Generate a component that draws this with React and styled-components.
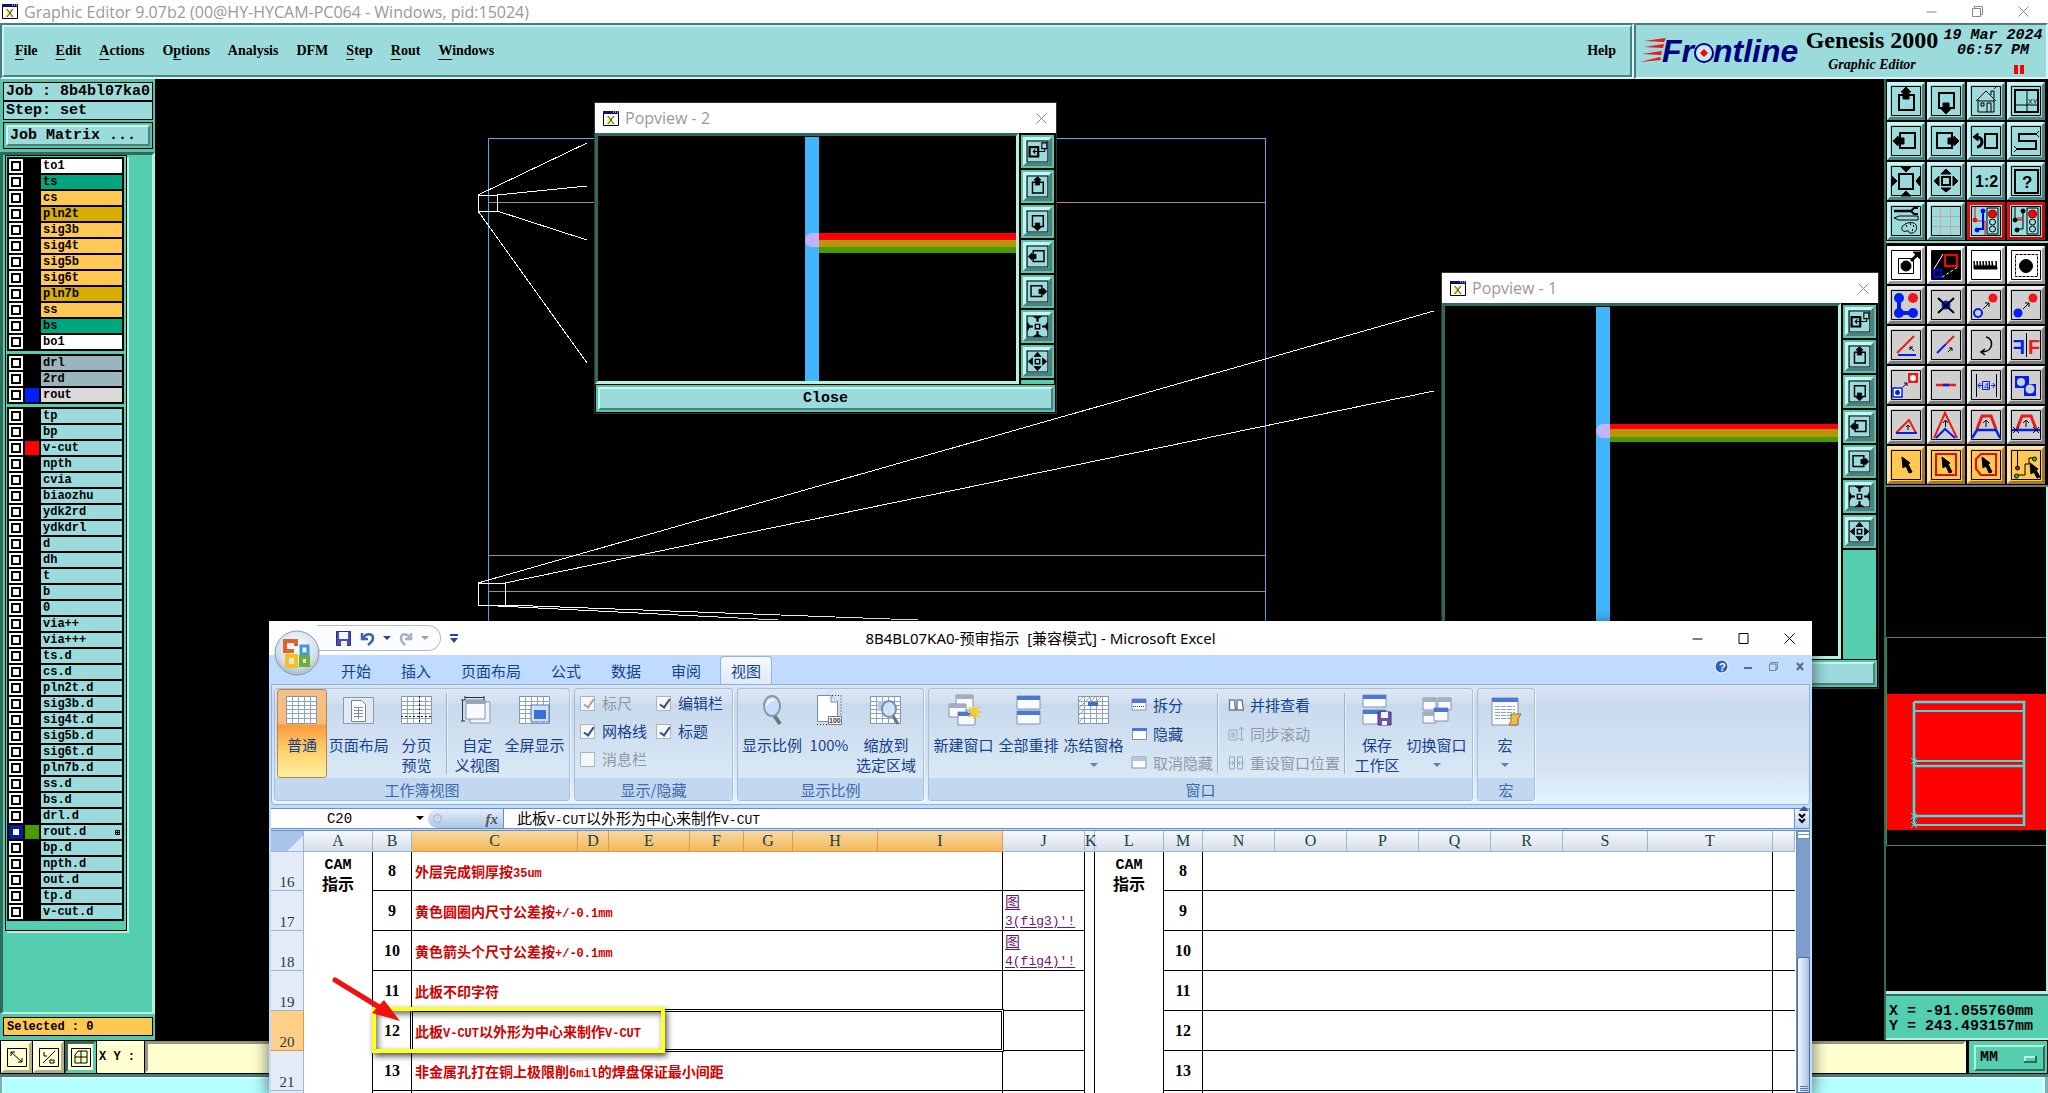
import React from "react";
import styled, { createGlobalStyle, css } from "styled-components";

const ui = `"Open Sans", "Noto Sans CJK SC", sans-serif`;
const cjk = `"Noto Sans CJK SC", sans-serif`;
const mono = `"Liberation Mono", monospace`;
const serif = `"Liberation Serif", serif`;

const GlobalStyle = createGlobalStyle`
  * {
    box-sizing: border-box;
  }
  body {
    margin: 0;
    background: #000;
    overflow: hidden;
  }
  button, input, select {
    font: inherit;
    color: inherit;
    margin: 0;
    border-radius: 0;
  }
  button {
    padding: 0;
    background: none;
    border: none;
  }
  svg {
    display: block;
  }
`;

const raised = css`
  border: 2px solid;
  border-color: #c5f6f3 #4d8180 #4d8180 #c5f6f3;
`;

const sunken = css`
  border: 2px solid;
  border-color: #4d7a7a #d6f7f6 #d6f7f6 #4d7a7a;
`;

const Screen = styled.div`
  position: relative;
  display: flex;
  flex-direction: column;
  height: 100vh;
  overflow: hidden;
  background: #000;
  font-family: ${ui};
`;

/* ---------- title bars ---------- */

const TitleBar = styled.header`
  display: flex;
  align-items: center;
  gap: 6px;
  height: ${(props) => props.height || 23}px;
  padding: 0 ${(props) => props.pad || 2}px;
  background: #fff;
  color: #999;
  font-size: 16px;
  line-height: 20px;
  white-space: nowrap;
`;

const Fill = styled.span`
  flex: 1;
`;

const WindowButton = styled.button`
  display: flex;
  justify-content: center;
  align-items: center;
  width: ${(props) => props.width || 46}px;
  height: 20px;
  color: ${(props) => props.color || "#888"};
`;

/* ---------- menu ---------- */

const MenuRow = styled.div`
  display: flex;
  height: 56px;
  flex-shrink: 0;
`;

const MenuFrame = styled.nav`
  ${sunken}
  flex: 1;
  background: #9bdbdb;
`;

const MenuInner = styled.div`
  ${raised}
  display: flex;
  align-items: center;
  gap: 18px;
  height: 100%;
  padding: 0 14px 0 11px;
`;

const MenuItem = styled.button`
  font-family: ${serif};
  font-weight: bold;
  font-size: 14px;
  line-height: 18px;
  color: #000;
  margin-left: ${(props) => (props.last ? "auto" : 0)};
  u {
    text-underline-offset: 4px;
  }
`;

const Brand = styled.div`
  ${sunken}
  display: flex;
  width: 414px;
  padding: 2px 2px 2px 4px;
  background: #9bdbdb;
  color: #000;
`;

const BrandName = styled.div`
  font-family: ${serif};
  font-weight: bold;
  font-size: 24px;
  line-height: 26px;
  text-align: center;
  width: 136px;
  white-space: nowrap;
  em {
    display: block;
    font-size: 14px;
    line-height: 24px;
  }
`;

const Clock = styled.div`
  flex: 1;
  display: flex;
  flex-direction: column;
  align-items: center;
  padding: 1px 0 0 2px;
  font: italic bold 15px/15px ${mono};
  white-space: nowrap;
`;

const Pause = styled.i`
  width: 10px;
  height: 9px;
  margin: 7px 0 0 52px;
  border: solid #f00;
  border-width: 0 4px;
`;

/* ---------- layer list ---------- */

const Body = styled.div`
  display: flex;
  flex: 1;
  min-height: 0;
`;

const Sidebar = styled.aside`
  display: flex;
  flex-direction: column;
  width: 155px;
  background: #55ceb0;
  font-family: ${mono};
  font-weight: bold;
  color: #000;
`;

const JobInfo = styled.div`
  padding: 3px 2px 3px 3px;
  background: #55c4a8;
  font-size: 15px;
`;

const InfoLine = styled.div`
  height: 19px;
  border: 1px solid #000;
  background: #9bdbdb;
  padding-left: 2px;
  line-height: 18px;
  white-space: pre;
`;

const MatrixBox = styled.div`
  margin-top: 2px;
  border: 1px solid #000;
  padding: 2px;
`;

const MatrixButton = styled.button`
  ${raised}
  width: 100%;
  height: 21px;
  padding-left: 2px;
  background: #9bdbdb;
  text-align: left;
  line-height: 17px;
`;

const LayerArea = styled.div`
  flex: 1;
  border: 3px solid;
  border-color: #2e6b5c #b5f0e0 #b5f0e0 #2e6b5c;
  border-bottom-width: 2px;
  padding-left: 2px;
`;

const LayerFrame = styled.div`
  display: flex;
  flex-direction: column;
  gap: 3px;
  width: 122px;
  padding: 1px 2px 9px 1px;
  border: 1px solid #000;
  box-shadow: 2px 2px 0 #b5f0e0;
`;

const LayerGroup = styled.div`
  display: grid;
  gap: 2px;
  padding: 2px;
  background: #000;
`;

const LayerRow = styled.label`
  display: grid;
  grid-template-columns: 14px 14px 1fr;
  gap: 2px;
  height: 14px;
  font-size: 12px;
  line-height: 14px;
`;

const LayerCheck = styled.input`
  appearance: none;
  width: 14px;
  height: 14px;
  background: #fff;
  box-shadow: inset 0 0 0 2px ${(props) => (props.checked ? "#0a1a9c" : "#fff")},
    inset 0 0 0 4px ${(props) => (props.checked ? "#0a1a9c" : "#000")};
`;

const Swatch = styled.span`
  background: ${(props) => props.color};
`;

const LayerName = styled.span`
  display: flex;
  justify-content: space-between;
  padding: 0 2px;
  background: ${(props) => props.color};
`;

const SelectedBar = styled.div`
  padding: 3px 2px 4px 3px;
  background: #55c4a8;
  font-size: 12px;
  div {
    height: 19px;
    padding-left: 3px;
    border: 1px solid #000;
    background: #ffc852;
    line-height: 18px;
  }
`;

const Canvas = styled.main`
  flex: 1;
  background: #000;
  svg {
    width: 100%;
    height: 100%;
  }
`;

/* ---------- tool palette ---------- */

const Palette = styled.aside`
  display: flex;
  flex-direction: column;
  width: 164px;
  border-left: 2px solid #2e6b5c;
`;

const ToolGrid = styled.div`
  display: grid;
  grid-template-columns: repeat(4, 38px);
  gap: 2px;
  padding: 3px 0 1px 1px;
  border-bottom: 2px solid ${(props) => props.edge};
`;

const tones = {
  teal: ["#9bdbdb", "#c5f6f3", "#4d8180"],
  alert: ["#9bdbdb", "#e01010", "#b01010"],
  white: ["#fff", "#fff", "#9a9a9a"],
  grey: ["#cfcfcf", "#efefef", "#7b7b7b"],
  orange: ["#ffc852", "#ffe6a8", "#a07a28"],
};

const Tool = styled.button`
  width: 38px;
  height: 38px;
  background: ${(props) => tones[props.tone][0]};
  border: 3px solid;
  border-color: ${(props) => tones[props.tone][1]} ${(props) => tones[props.tone][2]}
    ${(props) => tones[props.tone][2]} ${(props) => tones[props.tone][1]};
`;

const Overview = styled.div`
  flex: 1;
  border: solid #b5f0e0;
  border-width: 0 2px 3px 0;
  svg {
    width: 100%;
    height: 100%;
  }
`;

const Coords = styled.div`
  height: 46px;
  padding: 8px 0 0 3px;
  background: #55ceb0;
  border-top: 2px solid #2e6b5c;
  border-bottom: 2px solid #b5f0e0;
  font: bold 15px/15px ${mono};
  white-space: pre;
`;

/* ---------- bottom strip ---------- */

const EntryBar = styled.div`
  display: flex;
  gap: 1px;
  height: 34px;
  padding: 1px;
  flex-shrink: 0;
`;

const SnapButton = styled.button`
  display: flex;
  justify-content: center;
  align-items: center;
  width: 31px;
  border: 3px solid;
  border-color: ${(props) => (props.on ? "#2e6b5c #55ceb0 #55ceb0 #2e6b5c" : "#ffffe8 #b0af86 #b0af86 #ffffe8")};
  background: #ffffcf;
`;

const EntryLabel = styled.label`
  width: 47px;
  padding-left: 2px;
  background: #ffffcf;
  font: bold 12px/32px ${mono};
  white-space: nowrap;
`;

const Entry = styled.input`
  flex: 1;
  min-width: 0;
  border: 3px solid;
  border-color: #97967a #ffffcf #ffffcf #97967a;
  background: #ffffcf;
  padding: 0 3px;
  font: 15px/24px ${mono};
`;

const UnitBox = styled.div`
  width: 78px;
  margin-left: 2px;
  padding: 3px 2px 3px 5px;
  background: #55ceb0;
`;

const UnitSelect = styled.select`
  appearance: none;
  width: 100%;
  height: 26px;
  padding-left: 4px;
  border: 2px solid;
  border-color: #b5f0e0 #2e6b5c #2e6b5c #b5f0e0;
  font: bold 15px/20px ${mono};
  background: linear-gradient(#2e6b5c, #2e6b5c) 48px 14px / 12px 2px no-repeat,
    linear-gradient(#2e6b5c, #2e6b5c) 59px 9px / 2px 7px no-repeat,
    linear-gradient(#b5f0e0, #b5f0e0) 48px 9px / 12px 2px no-repeat,
    linear-gradient(#b5f0e0, #b5f0e0) 48px 9px / 2px 6px no-repeat, #55ceb0;
`;

const MessageStrip = styled.div`
  height: 19px;
  flex-shrink: 0;
  border-top: 3px solid #4d7a7a;
  padding: 0 3px 0 2px;
  background: #6fb5b4;
  div {
    height: 16px;
    background: #b2fffd;
    border: solid #d9ffff;
    border-width: 2px 3px 0 2px;
  }
`;

/* ---------- popview windows ---------- */

const PopWindow = styled.section`
  position: absolute;
  left: ${(props) => props.x}px;
  top: ${(props) => props.y}px;
  width: ${(props) => props.width}px;
  outline: 1px solid #333;
  background: #000;
`;

const PopBody = styled.div`
  display: flex;
  gap: 2px;
  height: ${(props) => props.height}px;
`;

const PopView = styled.div`
  flex: 1;
  border: 3px solid;
  border-color: #2e6b5c #b5f0e0 #b5f0e0 #2e6b5c;
  svg {
    width: 100%;
    height: 100%;
  }
`;

const PopTools = styled.div`
  display: flex;
  flex-direction: column;
  gap: 2px;
  width: 35px;
  padding: 2px 2px 0 0;
`;

const PopTool = styled.button`
  width: 33px;
  height: 33px;
  padding: 2px;
  flex-shrink: 0;
  background: #55c4a8;
  span {
    display: block;
    background: #9bdbdb;
    border: 3px solid;
    border-color: #c5f6f3 #4d8180 #4d8180 #c5f6f3;
  }
`;

const PopFiller = styled.div`
  flex: 1;
  background: #55ceb0;
`;

const PopClose = styled.button`
  display: block;
  width: calc(100% - 2px);
  height: 27px;
  margin: 1px;
  padding: 2px;
  background: #55c4a8;
  span {
    ${raised}
    display: block;
    height: 23px;
    background: #9bdbdb;
    font: bold 15px/20px ${mono};
  }
`;

/* ---------- spreadsheet window ---------- */

const ExcelWindow = styled.section`
  position: absolute;
  left: 269px;
  right: 236px;
  top: 621px;
  bottom: 0;
  display: flex;
  flex-direction: column;
  overflow: hidden;
  background: #bfdbff;
  color: #15428b;
  font: 15px/20px ${cjk};
`;

const Shadow = styled.div`
  position: absolute;
  left: 269px;
  right: 236px;
  top: 621px;
  bottom: 0;
  box-shadow: 0 4px 16px rgba(0, 0, 0, 0.6);
`;

const ExcelTitle = styled.header`
  display: grid;
  grid-template-columns: 1fr auto 1fr;
  align-items: center;
  height: 34px;
  flex-shrink: 0;
  background: #fff;
  color: #000;
  font-family: "Noto Sans", "Noto Sans CJK SC", sans-serif;
  white-space: pre;
`;

const QuickBar = styled.div`
  display: flex;
  align-items: center;
  gap: 9px;
  padding-left: 48px;
`;

const QuickPill = styled.div`
  display: flex;
  align-items: center;
  gap: 6px;
  height: 26px;
  width: 124px;
  padding-left: 19px;
  border: 1px solid #b7bcc4;
  border-left: none;
  border-radius: 0 13px 13px 0;
  background: #fbfcfd;
`;

const TitleControls = styled.div`
  display: flex;
  justify-content: flex-end;
`;

const OfficeButton = styled.button`
  position: absolute;
  left: 5px;
  top: 9px;
`;

const TabRow = styled.div`
  display: flex;
  gap: 8px;
  height: 29px;
  padding: 1px 4px 0 61px;
  flex-shrink: 0;
`;

const Tab = styled.button`
  height: 29px;
  padding: 0 10px;
  border: 1px solid ${(props) => (props.active ? "#8db2e3" : "transparent")};
  border-bottom: none;
  border-radius: 4px 4px 0 0;
  background: ${(props) => (props.active ? "linear-gradient(#f5faff, #dde8f5)" : "none")};
  white-space: nowrap;
`;

const Ribbon = styled.div`
  display: flex;
  gap: 4px;
  margin: 0 2px;
  padding: 3px 2px;
  height: 121px;
  flex-shrink: 0;
  border: 1px solid #8db2e3;
  border-radius: 0 0 4px 4px;
  background: linear-gradient(#dbe6f4, #cfddee 14px, #c8d8ed 15px, #d5e3f3 70%, #e3f3ff);
`;

const Group = styled.section`
  display: flex;
  flex-direction: column;
  width: ${(props) => props.width}px;
  border: 1px solid #a5bfdd;
  border-radius: 3px;
  background: linear-gradient(#dde7f4, #d2dff0 14px, #c8d9ed 15px, #dbe9f6 91px);
  box-shadow: 1px 1px 0 #eef6ff;
  overflow: hidden;
`;

const GroupBody = styled.div`
  display: flex;
  flex: 1;
  padding: 0 2px;
`;

const GroupName = styled.div`
  height: 22px;
  background: #c1d8f0;
  color: #3e6aaa;
  text-align: center;
  line-height: 24px;
`;

const BigButton = styled.button`
  display: flex;
  flex-direction: column;
  align-items: center;
  width: ${(props) => props.width || 65}px;
  padding-top: 4px;
  white-space: pre;
  border: 1px solid ${(props) => (props.active ? "#b08a55" : "transparent")};
  border-radius: 3px;
  background: ${(props) =>
    props.active ? "linear-gradient(#f4c08a, #fbbb78 34px, #fb9b3c 35px, #fdd06a 70%, #fff0a0)" : "none"};
  span {
    margin-top: 7px;
  }
`;

const Caret = styled.i`
  width: 0;
  margin-top: ${(props) => props.top || 0}px;
  border: 4px solid transparent;
  border-top-color: ${(props) => props.color || "#5a7fb5"};
  border-bottom: none;
`;

const Divider = styled.i`
  width: 2px;
  margin: 4px 4px;
  background: #93b3da;
  border-right: 1px solid #eaf3fc;
`;

const CheckGrid = styled.div`
  display: grid;
  grid-template-columns: 76px 1fr;
  grid-auto-rows: 28px;
  padding-left: 3px;
`;

const CheckLabel = styled.label`
  display: flex;
  align-items: center;
  gap: 7px;
  color: ${(props) => (props.off ? "#8f98a5" : "#15428b")};
  white-space: nowrap;
`;

const Check = styled.input`
  appearance: none;
  width: 15px;
  height: 15px;
  border: 1px solid #aab6c6;
  background: #f6f6f4;
  &:checked::before {
    content: "";
    display: block;
    width: 4px;
    height: 9px;
    margin: 0 0 0 5px;
    border: solid ${(props) => (props.disabled ? "#a5a5a5" : "#33508a")};
    border-width: 0 2px 2px 0;
    transform: rotate(35deg);
  }
`;

const SmallList = styled.div`
  display: flex;
  flex-direction: column;
  gap: 9px;
  padding: 6px 0 0 5px;
`;

const SmallButton = styled.button`
  display: flex;
  align-items: center;
  gap: 6px;
  height: 20px;
  color: ${(props) => (props.disabled ? "#8f98a5" : "#15428b")};
  white-space: nowrap;
`;

const FormulaBar = styled.div`
  display: flex;
  height: 21px;
  margin: 3px 2px 1px;
  flex-shrink: 0;
  border: 1px solid #6a8fc0;
  border-left: none;
  background: #fff;
  color: #000;
`;

const NameBox = styled.input`
  width: 145px;
  border: none;
  text-align: center;
  font: 14px/18px ${mono};
  padding: 0 8px 0 0;
`;

const FxArea = styled.div`
  display: flex;
  align-items: center;
  justify-content: space-between;
  width: 76px;
  margin-left: 4px;
  padding: 0 5px;
  border-right: 1px solid #6a8fc0;
  border-radius: 10px 0 0 10px;
  background: linear-gradient(#e6effa, #a9c4e8);
  font: italic bold 15px/18px ${serif};
  color: #555;
  i {
    width: 9px;
    height: 9px;
    border-radius: 5px;
    background: #cdd8e8;
    border: 1px solid #9fb4d2;
  }
`;

const Formula = styled.div`
  flex: 1;
  padding-left: 13px;
  line-height: 18px;
`;

const ExpandButton = styled.button`
  width: 15px;
  border-left: 1px solid #6a8fc0;
  background: linear-gradient(#f0f6ff, #bdd2ee);
  svg {
    margin: 0 auto;
  }
`;

const Ascii = styled.span`
  font-family: ${mono};
  font-size: ${(props) => props.size}px;
  line-height: 1;
`;

const SheetArea = styled.div`
  position: relative;
  display: flex;
  flex: 1;
  min-height: 0;
  margin: 0 2px;
  border-top: 1px solid #6a8fc0;
  background: #fff;
`;

const SheetClip = styled.div`
  flex: 1;
  min-width: 0;
  overflow: hidden;
`;

const Sheet = styled.table`
  table-layout: fixed;
  width: 1524px;
  border-spacing: 0;
  color: #000;
`;

const ColHead = styled.th`
  height: 21px;
  padding: 0;
  border: solid #9eb6ce;
  border-width: 0 1px 1px 0;
  background: ${(props) => (props.on ? "linear-gradient(#f8d8a0, #f2b95c)" : "linear-gradient(#f6f9fc, #d5deea)")};
  border-color: ${(props) => (props.on ? "#e8954a" : "#9eb6ce")};
  font: 16px/20px ${serif};
  color: #20403f;
`;

const Corner = styled(ColHead)`
  background: linear-gradient(135deg, #a9c4e9 70%, #dfe9f6 70%);
`;

const RowHead = styled.th`
  height: ${(props) => props.height}px;
  padding: 0;
  vertical-align: bottom;
  border: solid ${(props) => (props.on ? "#e8954a" : "#9eb6ce")};
  border-width: 0 1px 1px 0;
  background: ${(props) => (props.on ? "#ffcf87" : "#e4ecf7")};
  font: 15px/15px ${serif};
  color: #20403f;
`;

const Cell = styled.td`
  position: relative;
  height: 0;
  padding: 0 3px;
  border: solid #000;
  border-width: 0 ${(props) => (props.noRight ? 0 : 1)}px ${(props) => (props.open ? 0 : 1)}px 0;
  white-space: nowrap;
`;

const SideCell = styled(Cell)`
  vertical-align: top;
  text-align: center;
  font-weight: bold;
  font-size: 16px;
  line-height: 20px;
`;

const NumCell = styled(Cell)`
  text-align: center;
  font: bold 16px/20px ${serif};
`;

const NoteCell = styled(Cell)`
  color: #d40000;
  font-weight: bold;
  font-size: 14px;
  line-height: 18px;
`;

const LinkCell = styled(Cell)`
  padding: 0 2px;
  a {
    display: block;
    height: 38px;
    color: #74146e;
    line-height: 18px;
    text-underline-offset: 2px;
  }
`;

const Selection = styled.i`
  position: absolute;
  inset: -1px;
  border: 1px solid #fff;
  box-shadow: 0 0 0 1px #000, inset 0 0 0 1px #000;
`;

const Callout = styled.div`
  position: absolute;
  left: 101px;
  top: 176px;
  width: 293px;
  height: 46px;
  border: 4px solid #ffff1e;
  box-shadow: 2px 3px 6px rgba(0, 0, 0, 0.7), inset 2px 3px 6px rgba(0, 0, 0, 0.6);
`;

const Pointer = styled.svg`
  position: absolute;
  left: 59px;
  top: 144px;
`;

const ScrollBar = styled.div`
  display: flex;
  flex-direction: column;
  align-items: center;
  width: 14px;
  border-left: 1px solid #6a8fc0;
  background: #7d9dcb;
`;

const SplitBox = styled.div`
  width: 13px;
  height: 8px;
  border: 1px solid #6a8fc0;
  background: linear-gradient(#fff 2px, #6a8fc0 2px, #6a8fc0 3px, #fff 3px);
`;

const UpArrow = styled.button`
  height: 118px;
  &::before {
    content: "";
    display: block;
    margin-top: -92px;
    border: 5px solid transparent;
    border-bottom-color: #3b5788;
    border-top: none;
  }
`;

const Thumb = styled.div`
  display: flex;
  flex-direction: column;
  align-items: center;
  flex: 1;
  width: 13px;
  padding-top: 128px;
  border: 1px solid #4d6c9c;
  border-radius: 2px 2px 0 0;
  background: linear-gradient(90deg, #f2f6fc, #cfdcf0 50%, #a9bedd);
  i {
    width: 8px;
    height: 1px;
    margin-bottom: 1px;
    background: #5d7aa8;
  }
`;

/* ---------- drawings ---------- */

const AppIcon = () => (
  <svg width="16" height="15" viewBox="0 0 16 15">
    <path d="M0.5 0.5h15v14h-15z" fill="#fff" stroke="#000" />
    <path d="M0 0h16v3H0z" fill="#10107a" />
    <path d="M10 1h1M12 1h1M14 1h1" stroke="#fff" />
    <path d="M4 5l6 8M10 5l-6 8" stroke="#f0e840" strokeWidth="2" />
    <path d="M5 5l6 8M11 5l-6 8" stroke="#444" />
  </svg>
);

const Glyph = ({ type, size = 11 }) => (
  <svg width={size} height={size} viewBox="0 0 11 11" fill="none" stroke="currentColor">
    {type === "min" && <path d="M0.5 6h10" />}
    {type === "max" && <path d="M1 0.5h9v10h-9z" />}
    {type === "restore" && <path d="M0.5 2.5h8v8h-8zM2.5 2.5v-2h8v8h-2" />}
    {type === "close" && <path d="M0.5 0.5l10 10M10.5 0.5l-10 10" />}
  </svg>
);

const FrontlineLogo = () => (
  <svg width="164" height="48" viewBox="0 0 164 48">
    <g fill="#f01818">
      <path d="M4 14l22-3-2 4z" />
      <path d="M4 20l20-3-1 4z" />
      <path d="M2 27l20-3-1 4z" />
      <path d="M0 35l20-5 1 3z" />
    </g>
    <text x="22" y="35" fontFamily="Liberation Sans, sans-serif" fontSize="32" fontWeight="bold" fontStyle="italic" fill="#000080">
      Fr
    </text>
    <circle cx="64" cy="26" r="9" fill="#c4eded" stroke="#000080" strokeWidth="2" />
    <path d="M64 22l4 4-4 4-4-4z" fill="#f00" />
    <text x="73" y="35" fontFamily="Liberation Sans, sans-serif" fontSize="32" fontWeight="bold" fontStyle="italic" fill="#000080">
      ntline
    </text>
  </svg>
);

const arrowUp = "M16 2l5 5h-2v7h-6V7h-2z";
const toolArt = {
  up: (
    <>
      <path d="M9 10h15v15H9z" fill="none" strokeWidth="2" />
      <path d={arrowUp} fill="#000" />
    </>
  ),
  down: (
    <>
      <path d="M9 8h15v15H9z" fill="none" strokeWidth="2" />
      <path d="M16 29l5-5h-2v-6h-6v6h-2z" fill="#000" />
    </>
  ),
  left: (
    <>
      <path d="M10 8h15v15H10z" fill="none" strokeWidth="2" />
      <path d="M3 16l5-5v2h6v6H8v2z" fill="#000" />
    </>
  ),
  right: (
    <>
      <path d="M7 8h15v15H7z" fill="none" strokeWidth="2" />
      <path d="M29 16l-5-5v2h-6v6h6v2z" fill="#000" />
    </>
  ),
  home: (
    <path d="M8 14v13h16V14M6 16L16 6l10 10M8 16h16M17 27v-9h4v9M11 18h3v3h-3zM21 10V6h3v7M24 4l2-2" fill="none" />
  ),
  layout: (
    <>
      <path d="M5 5h23v22H5z" fill="none" strokeWidth="2" />
      <path d="M17 5v22M5 20h23" fill="none" />
      <text x="18" y="19" fontSize="7" stroke="none" fontFamily="Liberation Sans, sans-serif">
        XY
      </text>
    </>
  ),
  undo: (
    <>
      <path d="M15 9h12v14H15z" fill="none" strokeWidth="2" />
      <path d="M6 12c5 0 6 3 6 5s-2 5-5 5" fill="none" strokeWidth="3" />
      <path d="M8 8v8l-5-4z" fill="#000" />
    </>
  ),
  path: (
    <>
      <path d="M26 9H9v7h17v8H7" fill="none" strokeWidth="2" />
      <path d="M26 9l3-3M26 9l3 3M7 24l-3-3M7 24l-3 3" />
    </>
  ),
  zoomIn: (
    <>
      <path d="M9 9h14v15H9z" fill="none" strokeWidth="2" />
      <path d="M11 2h10l-5 5zM11 31h10l-5-5zM2 11v10l5-5zM30 11v10l-4-5z" fill="#000" />
    </>
  ),
  zoomOut: (
    <>
      <path d="M12 12h8v8h-8z" fill="none" strokeWidth="2" />
      <path d="M11 9h10l-5-5zM11 23h10l-5 4zM9 11v10l-5-5zM23 11v10l5-5z" fill="#000" />
    </>
  ),
  shrink: (
    <>
      <path d="M13 13h6v6h-6z" fill="none" strokeWidth="2" />
      <path d="M10 2h12l-5 3v4h-2V5zM10 30h12l-5-3v-4h-2v4zM2 10v12l3-5h4v-2H5zM30 10v12l-3-5h-4v-2h4z" fill="#000" />
    </>
  ),
  grow: (
    <>
      <path d="M13 13h6v6h-6z" fill="none" strokeWidth="2" />
      <path d="M11 9h10l-5-6zM11 23h10l-5 6zM9 11v10l-6-5zM23 11v10l6-5z" fill="#000" />
    </>
  ),
  ratio: (
    <text x="5" y="22" fontSize="16" fontWeight="bold" stroke="none" fontFamily="Liberation Sans, sans-serif">
      1:2
    </text>
  ),
  help: (
    <>
      <path d="M5 5h23v23H5z" fill="none" strokeWidth="2" />
      <text x="12" y="23" fontSize="17" fontWeight="bold" stroke="none" fontFamily="Liberation Sans, sans-serif">
        ?
      </text>
    </>
  ),
  setup: (
    <>
      <path d="M4 6h17" strokeWidth="2.500" />
      <path d="M28 3h-4l-3 3 3 3h4" fill="none" strokeWidth="2" />
      <path d="M4 13l5-2h19v4H9z" fill="none" />
      <path d="M12 22c3-5 12-6 14-2s-1 9-6 8c-2 0 0-3-3-2s-6 0-5-4z" fill="none" />
      <path d="M16 21h1M20 19h1M23 21h1M22 25h1" strokeWidth="2" />
    </>
  ),
  grid: <path d="M10.5 2v28M20.5 2v28M2 11.5h28M2 21.5h28" stroke="#c9a3a5" />,
  netRed: (
    <>
      <path d="M5 2v14h10v14" stroke="#f00" fill="none" />
      <path d="M13 5v19H7" stroke="#00f" fill="none" strokeWidth="2" />
      <circle cx="5" cy="15" r="2" fill="#f00" stroke="#f00" />
      <circle cx="13" cy="6" r="2" fill="#00f" stroke="#00f" />
      <circle cx="7" cy="25" r="2" fill="#00f" stroke="#00f" />
      <path d="M17 3h11v26H17z" fill="none" />
      <circle cx="22.5" cy="9" r="4" fill="#f00" stroke="#800" />
      <circle cx="22.5" cy="17" r="3" fill="none" />
      <circle cx="22.5" cy="24" r="3" fill="none" />
    </>
  ),
  netBlack: (
    <>
      <path d="M5 2v14M13 5v19H7" fill="none" />
      <path d="M6 15h7M8 12v3M10 12v3M12 12v3" stroke="#e01010" />
      <circle cx="5" cy="15" r="2" />
      <circle cx="13" cy="6" r="2" />
      <circle cx="7" cy="25" r="2" />
      <path d="M17 3h11v26H17z" fill="none" />
      <circle cx="22.5" cy="9" r="4" fill="#f00" stroke="#800" />
      <circle cx="22.5" cy="17" r="3" fill="none" />
      <circle cx="22.5" cy="24" r="3" fill="none" />
    </>
  ),
  moveOut: (
    <>
      <path d="M8.5 9.5h15v15h-15z" fill="none" />
      <circle cx="16" cy="17" r="5" />
      <path d="M21 12l6-6" strokeWidth="3" />
      <path d="M23 3h7v7z" />
    </>
  ),
  copyLayer: (
    <>
      <path d="M2 2h28v28H2z" />
      <path d="M15 6h12v11H15z" fill="none" stroke="#f00" strokeWidth="2" />
      <path d="M4 21h7v7H4z" fill="none" stroke="#00f" strokeWidth="2" />
      <path d="M4 20L13 5" stroke="#fff" />
      <path d="M12 28l16-10" stroke="#fff" strokeDasharray="3 2" />
    </>
  ),
  ruler: <path d="M4 20v-8l1 5h2v-5l1 5h2v-5l1 5h2v-5l1 5h2v-5l1 5h2v-5l1 5h2v-5l1 5h3v-5l1 8z" />,
  area: (
    <>
      <path d="M5.5 5.5h22v22h-22z" fill="none" strokeDasharray="3 1" />
      <circle cx="16" cy="17" r="6.5" />
    </>
  ),
  pads: (
    <>
      <path d="M9 9v15h14" fill="none" stroke="#0020f0" strokeWidth="4" />
      <g stroke="none" fill="#0020f0">
        <circle cx="9" cy="9" r="5" />
        <circle cx="9" cy="24" r="5" />
        <circle cx="23" cy="24" r="5" />
        <circle cx="23" cy="9" r="5" fill="#f01818" />
      </g>
    </>
  ),
  erase: (
    <>
      <circle cx="16" cy="16" r="4.5" fill="#0020f0" stroke="none" />
      <path d="M8 9l16 15M24 9L8 24" strokeWidth="2" />
    </>
  ),
  moveRing: (
    <>
      <circle cx="8" cy="24" r="4" fill="none" stroke="#0020f0" strokeWidth="2" />
      <circle cx="23" cy="9" r="4.5" fill="#f01818" stroke="none" />
      <path d="M13 20l6-6M15 14h4v4" fill="none" />
    </>
  ),
  moveDot: (
    <>
      <circle cx="8" cy="24" r="4.5" fill="#0020f0" stroke="none" />
      <circle cx="23" cy="9" r="4.5" fill="#f01818" stroke="none" />
      <path d="M13 20l6-6M15 14h4v4" fill="none" />
    </>
  ),
  angle: (
    <>
      <path d="M7 24L24 7" stroke="#f01818" strokeWidth="2" />
      <path d="M8 26h18" stroke="#0020f0" strokeWidth="2" />
      <path d="M24 22l-4-4M20 21v-3h3" fill="none" />
    </>
  ),
  extend: (
    <>
      <path d="M7 24l9-9" stroke="#0020f0" strokeWidth="2" />
      <path d="M16 15l8-8" stroke="#f01818" strokeWidth="2" />
      <path d="M18 23l4-4M19 19h3v3" fill="none" />
    </>
  ),
  rotate: <path d="M16 8c8 1 8 15-4 15M15 20l-4 3 4 3" fill="none" strokeWidth="1.5" />,
  mirror: (
    <>
      <path d="M16.5 4v24" />
      <text x="18" y="25" fontSize="20" fontWeight="bold" fill="#f01818" stroke="none" fontFamily="Liberation Sans, sans-serif">
        F
      </text>
      <g transform="matrix(-1 0 0 1 32 0)">
        <text x="17" y="25" fontSize="20" fontWeight="bold" fill="#0020f0" stroke="none" fontFamily="Liberation Sans, sans-serif">
          F
        </text>
      </g>
    </>
  ),
  padSwap: (
    <>
      <path d="M18 4h10v10H18z" fill="#f01818" stroke="none" />
      <circle cx="23" cy="9" r="3" fill="#fff" stroke="none" />
      <path d="M3 19h9v9H3z" fill="#fff" stroke="#0020f0" strokeWidth="1.5" />
      <circle cx="7.5" cy="23.5" r="2.5" fill="#0020f0" stroke="none" />
      <path d="M13 18l4-4M14 14h3v3" fill="none" />
    </>
  ),
  segment: (
    <>
      <path d="M6 16h20" stroke="#f01818" strokeWidth="2.5" />
      <path d="M13 16h6" stroke="#0020f0" strokeWidth="2.5" />
    </>
  ),
  spacing: (
    <>
      <path d="M6.5 5v23M26.5 5v23" />
      <path d="M8 16.500h4M21 16.500h4M10 14l-2 2.500 2 2.500M23 14l2 2.500-2 2.500M12.500 12.500h7v8h-7z" fill="none" stroke="#0020f0" />
      <text x="14" y="20" fontSize="9" fill="#0020f0" stroke="none" fontFamily="Liberation Sans, sans-serif">
        4
      </text>
    </>
  ),
  union: (
    <>
      <path d="M5 7h14v8h7v12H14v-8H5z" fill="#0020f0" stroke="none" />
      <circle cx="11" cy="13" r="4" fill="#cfcfcf" stroke="none" />
      <circle cx="20" cy="20" r="4.5" fill="#cfcfcf" stroke="none" />
    </>
  ),
  tri: (
    <>
      <path d="M6 24l13-13 7 13" fill="none" stroke="#f01818" strokeWidth="2" />
      <path d="M6 24h21" stroke="#0020f0" strokeWidth="2" />
      <path d="M18 21v-5M16 18l2-2 2 2" fill="none" />
    </>
  ),
  peak: (
    <>
      <path d="M4 29L15 4l12 25" fill="none" stroke="#f01818" strokeWidth="2" />
      <path d="M6 29l9-9 10 9" fill="none" stroke="#0020f0" strokeWidth="2" />
      <path d="M15.500 18v-7M13 14l2.500-3 2.500 3" fill="none" />
    </>
  ),
  trap: (
    <>
      <path d="M7 20l5-13h9l5 13" fill="none" stroke="#f01818" strokeWidth="3" />
      <path d="M2 29l5-8h19l4 8" fill="none" stroke="#0020f0" strokeWidth="2.500" />
      <path d="M16 18v-7M13 14l3-3 3 3" fill="none" />
    </>
  ),
  trapCut: (
    <>
      <path d="M7 20l5-13h9l5 13" fill="none" stroke="#f01818" strokeWidth="3" />
      <path d="M2 21h28" stroke="#0020f0" strokeWidth="2.500" />
      <path d="M16 18v-7M13 14l3-3 3 3M3 18l6 6M9 18l-6 6M23 18l6 6M29 18l-6 6" fill="none" />
    </>
  ),
  pick: <path d="M12 8l8 6-2 1 4 8-3 1-3-7-3 2z" />,
  pickBox: (
    <>
      <path d="M6 5h20v21H6z" fill="none" stroke="#e01010" strokeWidth="2" />
      <path d="M12 8l8 6-2 1 4 8-3 1-3-7-3 2z" />
    </>
  ),
  pickPoly: (
    <>
      <path d="M11 5h15v21H11l-5-6V10z" fill="none" stroke="#e01010" strokeWidth="2" />
      <path d="M12 8l8 6-2 1 4 8-3 1-3-7-3 2z" />
    </>
  ),
  pickNet: (
    <>
      <path d="M7.500 2v18M8 26h7V15h4V9h5" fill="none" />
      <circle cx="7.500" cy="19" r="2" fill="#f00" />
      <circle cx="6.500" cy="27" r="2" fill="#2fd02f" />
      <circle cx="24.500" cy="10" r="2" fill="#2fd02f" />
      <path d="M20 14l8 6-2 1 4 7-3 1-3-6-3 2z" />
    </>
  ),
  link: (
    <>
      <path d="M5 10h12v13H5z" fill="none" strokeWidth="3" />
      <path d="M22 4h7v8h-7zM10 16h16v-4M13 13l-3 3 3 3" fill="none" strokeWidth="1.500" />
    </>
  ),
};

const ToolIcon = ({ name, size = 32 }) => (
  <svg width={size} height={size} viewBox="0 0 32 32" stroke="#000" fill="#000">
    <path d="M1.500 1.500h29v29h-29z" fill="none" strokeWidth={size < 32 ? 1.500 : 1} />
    {toolArt[name]}
  </svg>
);

const sheetIcon = (
  <>
    <path d="M1.500 2.500h30v27h-30z" fill="#fff" stroke="#7d97b8" />
    <path d="M1 7.500h31M1 11.500h31M1 15.500h31M1 19.500h31M1 24.500h31M7.500 2v28M13.500 2v28M19.500 2v28M25.500 2v28" stroke="#8fa3bd" />
  </>
);

const win = (x, y, w, h, bar = "#4b78d8") => (
  <>
    <path d={`M${x} ${y}h${w}v${h}h-${w}z`} fill="#f8fafd" stroke="#8294ad" />
    <path d={`M${x} ${y}h${w}v4h-${w}z`} fill={bar} />
  </>
);

const ribbonArt = {
  normal: sheetIcon,
  layout: (
    <>
      <path d="M1.500 3.500h30v26h-30z" fill="#e2e9f1" stroke="#8a98aa" />
      <path d="M9.500 6.500h10l4 4v17h-14z" fill="#fff" stroke="#6f84a0" />
      <path d="M12 13.500h9M12 16.500h9M12 19.500h9M12 22.500h9M16.500 13v12" stroke="#7b8ea9" />
    </>
  ),
  breaks: (
    <>
      {sheetIcon}
      <path d="M1 22.500h31M19.500 2v28" stroke="#222" strokeDasharray="2 2" />
    </>
  ),
  custom: (
    <>
      <path d="M10 8h20v21H10z" fill="#edf2f8" stroke="#8a98aa" />
      {win(6, 6, 19, 19, "#98a5b5")}
      <path d="M2.500 6v21M1 6h4M1 27h4M5 3.500h19M5 2v4M24 2v4" stroke="#333" fill="none" />
    </>
  ),
  full: (
    <>
      {sheetIcon}
      <path d="M13 11h18v17H13z" fill="#cfe0fa" stroke="#5574b5" />
      <path d="M16 16h12v9H16z" fill="#3b6fd6" />
    </>
  ),
  zoom: (
    <>
      <path d="M19 21l6 9" stroke="#6d7680" strokeWidth="4" />
      <ellipse cx="17" cy="12" rx="8" ry="10" fill="#c7dffa" stroke="#8397b0" strokeWidth="2" />
      <path d="M12 11c1-5 5-6 8-5" stroke="#fff" strokeWidth="2" fill="none" />
    </>
  ),
  hundred: (
    <>
      <path d="M5.500 1.500h14l6 6v20h-20z" fill="#fff" stroke="#7b8ea9" />
      <path d="M19 1v7h7" fill="#dfe8f3" stroke="#7b8ea9" />
      <path d="M20 1.500h9v19M5 30.500h12" stroke="#333" strokeDasharray="1 2" fill="none" />
      <path d="M16.500 22.500h13v8h-13z" fill="#fff" stroke="#777" />
      <text x="17" y="29" fontSize="7" fontWeight="bold" fill="#333" fontFamily="Liberation Sans, sans-serif">
        100
      </text>
    </>
  ),
  fit: (
    <>
      {sheetIcon}
      <path d="M9 7h14v10H9z" fill="#a9c9f5" />
      <path d="M24 22l5 8" stroke="#6d7680" strokeWidth="3" />
      <ellipse cx="20" cy="15" rx="7" ry="8" fill="#d5e7fb" fillOpacity="0.8" stroke="#7d8fa6" strokeWidth="2" />
    </>
  ),
  newWin: (
    <>
      {win(9, 1, 17, 15, "#a5afbb")}
      {win(2, 10, 17, 13, "#a5afbb")}
      {win(11, 18, 17, 13)}
      <path d="M27 12v13M21 18h13M22 13l10 10M32 13L22 23" stroke="#f8cf2a" strokeWidth="2" />
    </>
  ),
  arrange: (
    <>
      {win(5, 2, 23, 13)}
      {win(5, 17, 23, 13)}
    </>
  ),
  freeze: (
    <>
      {sheetIcon}
      <path d="M2 7l5-5M2 14L14 2M2 21l6-6M2 28l6-6M14 7l5-5M20 7l5-5" stroke="#8fa3bd" />
      <path d="M11 8h10v4H11z" fill="#3b6fd6" />
    </>
  ),
  save: (
    <>
      {win(3, 1, 23, 12)}
      {win(3, 16, 23, 14)}
      <path d="M18 18h13v13H18z" fill="#6a55a8" stroke="#433480" />
      <path d="M21 18h7v6h-7zM22 27h5v4h-5z" fill="#f5f3ff" />
    </>
  ),
  switchWin: (
    <>
      {win(3, 4, 13, 12, "#a5afbb")}
      {win(18, 4, 13, 12, "#a5afbb")}
      {win(3, 18, 13, 11, "#a5afbb")}
      {win(14, 14, 14, 13)}
    </>
  ),
  macro: (
    <>
      {win(4, 4, 26, 27)}
      <path d="M7 12.500h20M7 15.500h20M7 18.500h20M7 21.500h20M7 24.500h16" stroke="#8da3c4" strokeDasharray="5 1" />
      <path d="M23 20h10l-3 5v6H21l2-4z" fill="#e9bd50" stroke="#9a7420" />
    </>
  ),
};

const smallArt = {
  split: (
    <>
      {win(1, 2, 14, 11)}
      <path d="M2 9.500h12" stroke="#333" strokeDasharray="1 1" />
    </>
  ),
  hide: (
    <>
      <path d="M1.500 2.500h14v11h-14z" fill="#fff" stroke="#333" strokeDasharray="1 1" />
      <path d="M1 2h15v3H1z" fill="#4b78d8" />
    </>
  ),
  unhide: win(1, 2, 14, 11, "#b9c3d3"),
  side: <path d="M1.500 3h5l1 10h-6zM9 3h5l1.500 10H9z" fill="#fff" stroke="#6c7f9b" strokeWidth="1.500" />,
  sync: <path d="M1 4h8v10H1zM3 7h4M3 9h4M3 11h4M13.500 1v14M11 4l2.500-3L16 4M11 12l2.500 3 2.500-3" fill="none" stroke="#9aa8bb" />,
  reset: <path d="M1.500 2h5v12h-5zM9.500 2h5v12h-5zM0 8h6M4 6l2 2-2 2M16 8h-6M12 6l-2 2 2 2" fill="none" stroke="#9aa8bb" />,
};

const RibbonIcon = ({ name }) => (
  <svg width="34" height="34" viewBox="0 0 34 34">
    {ribbonArt[name]}
  </svg>
);

const SmallIcon = ({ name }) => (
  <svg width="16" height="16" viewBox="0 0 16 16">
    {smallArt[name]}
  </svg>
);

const OfficeLogo = () => (
  <svg width="46" height="46" viewBox="0 0 46 46">
    <defs>
      <radialGradient id="orb" cx="50%" cy="35%" r="65%">
        <stop offset="0" stopColor="#fff" />
        <stop offset="0.7" stopColor="#d3deec" />
        <stop offset="1" stopColor="#a9b8cc" />
      </radialGradient>
    </defs>
    <circle cx="23" cy="23" r="22" fill="url(#orb)" stroke="#8d9bb0" />
    <g fill="none" strokeWidth="4">
      <path d="M20 21h-9V11h11v5" stroke="#e2622a" />
      <path d="M27 16h7v8h-7z" stroke="#3b9ad8" strokeWidth="3" />
      <path d="M13 26h9v10h-9z" stroke="#f5c21d" />
      <path d="M27 27h7v8h-7z" stroke="#6fae35" />
    </g>
  </svg>
);

/* ---------- data ---------- */

const menus = [
  ["", "F", "ile"],
  ["", "E", "dit"],
  ["", "A", "ctions"],
  ["O", "p", "tions"],
  ["Analysis"],
  ["DFM"],
  ["", "S", "tep"],
  ["", "R", "out"],
  ["", "W", "indows"],
];

const aqua = "#9bdbdb";
const gold = "#ffc852";
const ochre = "#d9ad00";
const green = "#00a67d";

const layerGroups = [
  [
    ["to1", "#fff"], ["ts", green], ["cs", gold], ["pln2t", ochre], ["sig3b", gold], ["sig4t", gold],
    ["sig5b", gold], ["sig6t", gold], ["pln7b", ochre], ["ss", gold], ["bs", green], ["bo1", "#fff"],
  ],
  [["drl", "#9ab5bd"], ["2rd", "#9ab5bd"], ["rout", "#dadada", "#0020ff"]],
  [
    "tp", "bp", "v-cut", "npth", "cvia", "biaozhu", "ydk2rd", "ydkdrl", "d", "dh", "t", "b", "0", "via++",
    "via+++", "ts.d", "cs.d", "pln2t.d", "sig3b.d", "sig4t.d", "sig5b.d", "sig6t.d", "pln7b.d", "ss.d",
    "bs.d", "drl.d", "rout.d", "bp.d", "npth.d", "out.d", "tp.d", "v-cut.d",
  ].map((name) => [name, aqua, { "v-cut": "#f00", "rout.d": "#479c00" }[name]]),
];

const viewTools = [
  "up", "down", "home", "layout", "left", "right", "undo", "path",
  "zoomIn", "zoomOut", "ratio", "help", "setup", "grid", "netRed", "netBlack",
];

const editTools = [
  "moveOut", "copyLayer", "ruler", "area", "pads", "erase", "moveRing", "moveDot",
  "angle", "extend", "rotate", "mirror", "padSwap", "segment", "spacing", "union",
  "tri", "peak", "trap", "trapCut", "pick", "pickBox", "pickPoly", "pickNet",
];

const popTools = ["link", "up", "down", "left", "right", "shrink", "grow"];

const tabs = ["开始", "插入", "页面布局", "公式", "数据", "审阅", "视图"];

const columns = [
  ["A", 69], ["B", 39], ["C", 166], ["D", 31], ["E", 81], ["F", 54], ["G", 49], ["H", 85], ["I", 125],
  ["J", 82], ["K", 10], ["L", 69], ["M", 39], ["N", 72], ["O", 72], ["P", 72], ["Q", 72], ["R", 72],
  ["S", 85], ["T", 125], ["", 22],
];

const rows = [
  { id: 16, no: 8, note: "外层完成铜厚按35um" },
  { id: 17, no: 9, note: "黄色圆圈内尺寸公差按+/-0.1mm", link: "3(fig3)'!" },
  { id: 18, no: 10, note: "黄色箭头个尺寸公差按+/-0.1mm", link: "4(fig4)'!" },
  { id: 19, no: 11, note: "此板不印字符" },
  { id: 20, no: 12, note: "此板V-CUT以外形为中心来制作V-CUT", selected: true },
  { id: 21, no: 13, note: "非金属孔打在铜上极限削6mil的焊盘保证最小间距" },
  { id: "", no: "", note: "" },
];

/* latin runs are set in the half-width face */
const Mixed = ({ text, size }) =>
  text.split(/([\x20-\x7e]+)/).map((part, i) =>
    i % 2 ? (
      <Ascii key={i} size={size}>
        {part}
      </Ascii>
    ) : (
      part
    )
  );

/* ---------- parts ---------- */

const Traces = ({ beam, top, thick }) => (
  <svg>
    <path d={`M${beam} 1v2000h14v-2000z`} fill="#41b6ff" />
    <path d={`M${beam + 14} ${top}h2000v${thick[0]}h-2000z`} fill="#f00" />
    <path d={`M${beam + 14} ${top + thick[0]}h2000v${thick[1]}h-2000z`} fill="#b8960b" />
    <path d={`M${beam + 14} ${top + thick[0] + thick[1]}h2000v${thick[2]}h-2000z`} fill="#479c00" />
    <path d={`M${beam + 14} ${top}h-7a7 7 0 0 0 0 14h7z`} fill="#c3b4f7" />
  </svg>
);

const Popview = ({ title, x, y, width, height, ...traces }) => (
  <PopWindow x={x} y={y} width={width}>
    <TitleBar height={30} pad={8}>
      <AppIcon />
      <span>{title}</span>
      <Fill />
      <WindowButton width={14} aria-label="Close window">
        <Glyph type="close" />
      </WindowButton>
    </TitleBar>
    <PopBody height={height}>
      <PopView>
        <Traces {...traces} />
      </PopView>
      <PopTools>
        {popTools.map((name) => (
          <PopTool key={name} aria-label={name}>
            <span>
              <ToolIcon name={name} size={23} />
            </span>
          </PopTool>
        ))}
        <PopFiller />
      </PopTools>
    </PopBody>
    <PopClose>
      <span>Close</span>
    </PopClose>
  </PopWindow>
);

const Layers = () => (
  <Sidebar>
    <JobInfo>
      <InfoLine>Job : 8b4bl07ka0</InfoLine>
      <InfoLine>Step: set</InfoLine>
      <MatrixBox>
        <MatrixButton>Job Matrix ...</MatrixButton>
      </MatrixBox>
    </JobInfo>
    <LayerArea>
      <LayerFrame>
        {layerGroups.map((group, i) => (
          <LayerGroup key={i}>
            {group.map(([name, color, swatch]) => (
              <LayerRow key={name}>
                <LayerCheck type="checkbox" checked={name === "rout.d"} readOnly />
                <Swatch color={swatch || "#000"} />
                <LayerName color={color}>
                  {name}
                  {name === "rout.d" && (
                    <svg width="5" height="14" viewBox="0 0 5 14">
                      <path d="M0.500 5.500h4v4h-4zM2.500 5v5M0 7.500h5" fill="none" stroke="#000" />
                    </svg>
                  )}
                </LayerName>
              </LayerRow>
            ))}
          </LayerGroup>
        ))}
      </LayerFrame>
    </LayerArea>
    <SelectedBar>
      <div>Selected : 0</div>
    </SelectedBar>
  </Sidebar>
);

const Board = () => (
  <Canvas>
    <svg fill="none" shapeRendering="crispEdges">
      <g transform="translate(-155 -79)">
        <path d="M488.500 1040V138.500H1265.500V1040" stroke="#5aa9e0" />
        <path d="M488 202.500h777M488 555.500h777M488 591.500h777" stroke="#b08c50" />
        <g stroke="#fff">
          <path d="M478.500 195.500h19v16h-19zM478.500 583.500h27v22h-27z" />
          <path d="M478 195L587 143M497 195l90-9M497 211l90 29M478 211l109 152" />
          <path d="M478 583L1434 311M505 583l929-192M478 605l300 15M505 605l413 15" />
        </g>
      </g>
    </svg>
  </Canvas>
);

const toneOf = (i) => (i < 4 ? "white" : i < 20 ? "grey" : "orange");

const ToolPalette = () => (
  <Palette>
    <ToolGrid edge="#7fdcc5">
      {viewTools.map((name, i) => (
        <Tool key={name} tone={i > 13 ? "alert" : "teal"} aria-label={name}>
          <ToolIcon name={name} />
        </Tool>
      ))}
    </ToolGrid>
    <ToolGrid edge="#777">
      {editTools.map((name, i) => (
        <Tool key={name} tone={toneOf(i)} aria-label={name}>
          <ToolIcon name={name} />
        </Tool>
      ))}
    </ToolGrid>
    <Overview>
      <svg fill="none">
        <g transform="translate(-1886 -487)">
          <path d="M2100 637.500H1886.500V845.500H2100" stroke="#4f8f2a" />
          <path d="M1887 694h200v136h-200z" fill="#f00" />
          <path d="M1914 702h110v124M1914 702v124M1914 766h110M1914 816h110" stroke="#5b6b6b" strokeWidth="4" />
          <path d="M1914 702h110v124M1914 702v124M1914 766h110M1914 816h110" stroke="#a9b5b5" strokeWidth="2" />
          <path d="M1914 711h110M1914 761h110M1914 825h110M1914 816v9" stroke="#35e0e0" strokeWidth="2" />
          <path d="M1911 758l6 6M1917 758l-6 6M1911 813l6 6M1917 813l-6 6M1911 822l6 6M1917 822l-6 6" stroke="#35e0e0" />
        </g>
      </svg>
    </Overview>
    <Coords>{"X = -91.055760mm\nY = 243.493157mm"}</Coords>
  </Palette>
);

const Big = ({ icon, label, caret, ...rest }) => (
  <BigButton {...rest}>
    <RibbonIcon name={icon} />
    <span>{label}</span>
    {caret && <Caret top={8} />}
  </BigButton>
);

const RibbonGroups = () => (
  <Ribbon>
    <Group width={296}>
      <GroupBody>
        <Big icon="normal" label="普通" width={50} active />
        <Big icon="layout" label="页面布局" width={64} />
        <Big icon="breaks" label={"分页\n预览"} width={52} />
        <Divider />
        <Big icon="custom" label={"自定\n义视图"} width={50} />
        <Big icon="full" label="全屏显示" />
      </GroupBody>
      <GroupName>工作簿视图</GroupName>
    </Group>
    <Group width={159}>
      <GroupBody>
        <CheckGrid>
          <CheckLabel off>
            <Check type="checkbox" defaultChecked disabled /> 标尺
          </CheckLabel>
          <CheckLabel>
            <Check type="checkbox" defaultChecked /> 编辑栏
          </CheckLabel>
          <CheckLabel>
            <Check type="checkbox" defaultChecked /> 网格线
          </CheckLabel>
          <CheckLabel>
            <Check type="checkbox" defaultChecked /> 标题
          </CheckLabel>
          <CheckLabel off>
            <Check type="checkbox" disabled /> 消息栏
          </CheckLabel>
        </CheckGrid>
      </GroupBody>
      <GroupName>显示/隐藏</GroupName>
    </Group>
    <Group width={187}>
      <GroupBody>
        <Big icon="zoom" label="显示比例" width={64} />
        <Big icon="hundred" label="100%" width={50} />
        <Big icon="fit" label={"缩放到\n选定区域"} width={64} />
      </GroupBody>
      <GroupName>显示比例</GroupName>
    </Group>
    <Group width={545}>
      <GroupBody>
        <Big icon="newWin" label="新建窗口" />
        <Big icon="arrange" label="全部重排" />
        <Big icon="freeze" label="冻结窗格" caret />
        <SmallList>
          <SmallButton>
            <SmallIcon name="split" /> 拆分
          </SmallButton>
          <SmallButton>
            <SmallIcon name="hide" /> 隐藏
          </SmallButton>
          <SmallButton disabled>
            <SmallIcon name="unhide" /> 取消隐藏
          </SmallButton>
        </SmallList>
        <Divider />
        <SmallList>
          <SmallButton>
            <SmallIcon name="side" /> 并排查看
          </SmallButton>
          <SmallButton disabled>
            <SmallIcon name="sync" /> 同步滚动
          </SmallButton>
          <SmallButton disabled>
            <SmallIcon name="reset" /> 重设窗口位置
          </SmallButton>
        </SmallList>
        <Divider />
        <Big icon="save" label={"保存\n工作区"} width={54} />
        <Big icon="switchWin" label="切换窗口" caret />
      </GroupBody>
      <GroupName>窗口</GroupName>
    </Group>
    <Group width={58}>
      <GroupBody>
        <Big icon="macro" label="宏" width={50} caret />
      </GroupBody>
      <GroupName>宏</GroupName>
    </Group>
  </Ribbon>
);

const SheetTable = () => (
  <Sheet>
    <colgroup>
      <col style={{ width: 33 }} />
      {columns.map(([name, width]) => (
        <col key={name} style={{ width }} />
      ))}
    </colgroup>
    <thead>
      <tr>
        <Corner />
        {columns.map(([name], i) => (
          <ColHead key={name} on={i > 1 && i < 9 ? 1 : undefined}>
            {name}
          </ColHead>
        ))}
      </tr>
    </thead>
    <tbody>
      {rows.map((row, i) => (
        <tr key={i}>
          <RowHead height={i ? 40 : 39} on={row.selected ? 1 : undefined}>
            {row.id}
          </RowHead>
          {i === 0 && (
            <SideCell rowSpan={7} open={1}>
              <Mixed text="CAM" size={15} />
              <br />
              指示
            </SideCell>
          )}
          <NumCell>{row.no}</NumCell>
          <NoteCell colSpan={7}>
            <Mixed text={row.note} size={12} />
            {row.selected && <Selection />}
          </NoteCell>
          <LinkCell>
            {row.link && (
              <a href={"#fig" + row.link[0]}>
                图
                <br />
                <Mixed text={row.link} size={13} />
              </a>
            )}
          </LinkCell>
          {i === 0 && <Cell rowSpan={7} open={1} />}
          {i === 0 && (
            <SideCell rowSpan={7} open={1}>
              <Mixed text="CAM" size={15} />
              <br />
              指示
            </SideCell>
          )}
          <NumCell>{row.no}</NumCell>
          <Cell colSpan={7} />
          <Cell noRight={1} />
        </tr>
      ))}
    </tbody>
  </Sheet>
);

const Excel = () => (
  <ExcelWindow>
    <ExcelTitle>
      <QuickBar>
        <QuickPill>
          <svg width="15" height="15" viewBox="0 0 15 15">
            <path d="M0.500 0.500h14v14h-14z" fill="#4a50b0" stroke="#2b2f86" />
            <path d="M3 1h9v7H3zM5 10h6v5H5z" fill="#f4f6ff" />
          </svg>
          <svg width="20" height="15" viewBox="0 0 20 15">
            <path d="M5 2v6h6M6 7c4-6 10-4 10 0s-3 5-5 7" fill="none" stroke="#3c62b8" strokeWidth="2.500" />
          </svg>
          <Caret color="#24478f" />
          <svg width="18" height="15" viewBox="0 0 18 15">
            <path d="M14 2v6H8M13 7C9 1 4 3 4 7s2 5 4 7" fill="none" stroke="#a9b2bf" strokeWidth="2.500" />
          </svg>
          <Caret color="#9aa0a8" />
        </QuickPill>
        <svg width="8" height="9" viewBox="0 0 8 9">
          <path d="M0 0h8v2H0zM0 4h8L4 9z" fill="#24478f" />
        </svg>
      </QuickBar>
      <span>{"8B4BL07KA0-预审指示  [兼容模式] - Microsoft Excel"}</span>
      <TitleControls>
        <WindowButton color="#000" aria-label="Minimize">
          <Glyph type="min" />
        </WindowButton>
        <WindowButton color="#000" aria-label="Maximize">
          <Glyph type="max" />
        </WindowButton>
        <WindowButton color="#000" aria-label="Close">
          <Glyph type="close" />
        </WindowButton>
      </TitleControls>
    </ExcelTitle>
    <TabRow>
      {tabs.map((name) => (
        <Tab key={name} active={name === "视图" ? 1 : undefined}>
          {name}
        </Tab>
      ))}
      <Fill />
      <WindowButton width={19} aria-label="Help">
        <svg width="15" height="15" viewBox="0 0 15 15">
          <circle cx="7.500" cy="7.500" r="6.500" fill="#2a62c8" stroke="#fff" />
          <text x="5" y="12" fontSize="11" fontWeight="bold" fill="#fff" fontFamily="Liberation Sans, sans-serif">
            ?
          </text>
        </svg>
      </WindowButton>
      <WindowButton width={17} color="#5d6b80" aria-label="Minimize workbook">
        <svg width="8" height="8">
          <path d="M0 6h8" stroke="#5d6b80" strokeWidth="2" />
        </svg>
      </WindowButton>
      <WindowButton width={19} color="#5d6b80" aria-label="Restore workbook">
        <Glyph type="restore" size={9} />
      </WindowButton>
      <WindowButton width={17} color="#5d6b80" aria-label="Close workbook">
        <svg width="8" height="9" viewBox="0 0 8 9">
          <path d="M1 1l6 7M7 1L1 8" stroke="#5d6b80" strokeWidth="2" />
        </svg>
      </WindowButton>
    </TabRow>
    <RibbonGroups />
    <FormulaBar>
      <NameBox aria-label="Name box" defaultValue="C20" />
      <Caret top={7} color="#000" />
      <FxArea>
        <i />
        fx
      </FxArea>
      <Formula>
        <Mixed text="此板V-CUT以外形为中心来制作V-CUT" size={13} />
      </Formula>
      <ExpandButton aria-label="Expand formula bar">
        <svg width="8" height="11" viewBox="0 0 8 11" fill="none" stroke="#000" strokeWidth="2">
          <path d="M1 1l3 3 3-3M1 6l3 3 3-3" />
        </svg>
      </ExpandButton>
    </FormulaBar>
    <SheetArea>
      <SheetClip>
        <SheetTable />
      </SheetClip>
      <ScrollBar>
        <SplitBox />
        <UpArrow aria-label="Scroll up" />
        <Thumb>
          <i />
          <i />
          <i />
        </Thumb>
      </ScrollBar>
      <Callout />
      <Pointer width="72" height="48" viewBox="0 0 72 48">
        <path d="M5 5l44 27" stroke="#f01010" strokeWidth="5" strokeLinecap="round" />
        <path d="M70 46L54 25 42 38z" fill="#f01010" />
      </Pointer>
    </SheetArea>
    <OfficeButton aria-label="Office">
      <OfficeLogo />
    </OfficeButton>
  </ExcelWindow>
);

const App = () => {
  return (
    <Screen>
      <GlobalStyle />
      <TitleBar>
        <AppIcon />
        <span>Graphic Editor 9.07b2 (00@HY-HYCAM-PC064 - Windows, pid:15024)</span>
        <Fill />
        <TitleControls>
          <WindowButton aria-label="Minimize">
            <Glyph type="min" />
          </WindowButton>
          <WindowButton aria-label="Restore">
            <Glyph type="restore" />
          </WindowButton>
          <WindowButton aria-label="Close">
            <Glyph type="close" />
          </WindowButton>
        </TitleControls>
      </TitleBar>
      <MenuRow>
        <MenuFrame>
          <MenuInner>
            {menus.map(([before, key, after]) => (
              <MenuItem key={before + key}>
                {before}
                {key && <u>{key}</u>}
                {after}
              </MenuItem>
            ))}
            <MenuItem last={1}>Help</MenuItem>
          </MenuInner>
        </MenuFrame>
        <Brand>
          <FrontlineLogo />
          <BrandName>
            Genesis 2000
            <em>Graphic Editor</em>
          </BrandName>
          <Clock>
            <span>19 Mar 2024</span>
            <span>06:57 PM</span>
            <Pause />
          </Clock>
        </Brand>
      </MenuRow>
      <Body>
        <Layers />
        <Board />
        <ToolPalette />
      </Body>
      <EntryBar>
        <SnapButton aria-label="Snap off">
          <svg width="20" height="19" viewBox="0 0 20 19" fill="none" stroke="#000">
            <path d="M0.500 0.500h19v18h-19zM4 4l11 10M4 8V4h4M15 10v4h-4" />
          </svg>
        </SnapButton>
        <SnapButton aria-label="Snap angle">
          <svg width="20" height="19" viewBox="0 0 20 19" fill="none" stroke="#000">
            <path d="M0.500 0.500h19v18h-19zM4 15L16 3M5 4v4h3M11 12h4v3h-4z" />
          </svg>
        </SnapButton>
        <SnapButton on={1} aria-label="Snap grid">
          <svg width="20" height="19" viewBox="0 0 20 19" fill="none" stroke="#000">
            <path d="M0.500 0.500h19v18h-19zM4 15V7l3-4h9v12zM10 3v12M4 9h12" />
          </svg>
        </SnapButton>
        <EntryLabel htmlFor="xy">X Y :</EntryLabel>
        <Entry id="xy" />
        <UnitBox>
          <UnitSelect aria-label="Units">
            <option>MM</option>
          </UnitSelect>
        </UnitBox>
      </EntryBar>
      <MessageStrip>
        <div />
      </MessageStrip>
      <Popview title="Popview - 2" x={595} y={103} width={461} height={251} beam={207} top={97} thick={[7, 7, 6]} />
      <Popview title="Popview - 1" x={1442} y={273} width={436} height={356} beam={151} top={118} thick={[5, 8, 5]} />
      <Shadow />
      <Excel />
    </Screen>
  );
};

export default App;
